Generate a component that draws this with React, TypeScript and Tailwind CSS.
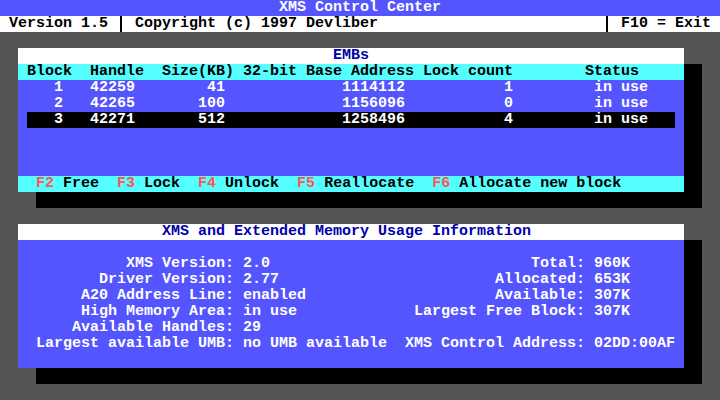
import React from 'react';

// 74-column text line inside a window, parts placed at column offsets
const WIDTH = 74;
const line = (parts: Array<[number, string]>) => {
  const cells = Array(WIDTH).fill(' ');
  parts.forEach(([col, text]) => {
    for (let i = 0; i < text.length; i++) cells[col + i] = text[i];
  });
  return cells.join('');
};
// right-aligned, ending at column `end`
const r = (end: number, text: string): [number, string] => [end - text.length + 1, text];

const blocks = [
  { block: '1', handle: '42259', size: '41', base: '1114112', locks: '1', status: 'in use' },
  { block: '2', handle: '42265', size: '100', base: '1156096', locks: '0', status: 'in use' },
  { block: '3', handle: '42271', size: '512', base: '1258496', locks: '4', status: 'in use' },
];

const info: Array<[string, string, string, string]> = [
  ['XMS Version:', '2.0', 'Total:', '960K'],
  ['Driver Version:', '2.77', 'Allocated:', '653K'],
  ['A20 Address Line:', 'enabled', 'Available:', '307K'],
  ['High Memory Area:', 'in use', 'Largest Free Block:', '307K'],
  ['Available Handles:', '29', '', ''],
  ['Largest available UMB:', 'no UMB available', 'XMS Control Address:', '02DD:00AF'],
];

const Bar = () => (
  <span className="inline-block w-[9px] h-4 shrink-0">
    <span className="block ml-[3px] w-[2px] h-4 bg-black" />
  </span>
);

const Row = ({ className = '', children }: { className?: string; children?: React.ReactNode }) => (
  <div className={`h-4 whitespace-pre ${className}`}>{children}</div>
);

const Key = ({ k }: { k: string }) => <span className="text-[#ff5555]">{k}</span>;

export default function App() {
  return (
    <div className="w-[720px] h-[400px] bg-[#555555] flex flex-col overflow-hidden font-['Liberation_Mono','DejaVu_Sans_Mono',monospace] font-bold text-[15px] leading-4">
      <Row className="bg-[#5555ff] text-white text-center">XMS Control Center</Row>
      <div className="h-4 bg-white text-black flex whitespace-pre">
        <span>{' Version 1.5 '}</span>
        <Bar />
        <span>{' Copyright (c) 1997 Devliber' + ' '.repeat(25)}</span>
        <Bar />
        <span>{' F10 = Exit '}</span>
      </div>
      <Row />

      {/* EMBs window */}
      <div className="ml-[18px] w-[666px] flex flex-col shadow-[18px_16px_0_0_#000]">
        <Row className="bg-white text-[#0000aa]">{line([[35, 'EMBs']])}</Row>
        <Row className="bg-[#55ffff] text-black">
          {line([[1, 'Block'], [8, 'Handle'], [16, 'Size(KB)'], [25, '32-bit Base Address'], [45, 'Lock count'], [63, 'Status']])}
        </Row>
        <div className="bg-[#5555ff] text-white h-24 flex flex-col">
          {blocks.map((b, i) => {
            const text = line([[4, b.block], [8, b.handle], r(22, b.size), r(42, b.base), r(54, b.locks), [64, b.status]]);
            return (
              <Row key={b.block} className={`ml-[9px] w-[648px] ${i === 2 ? 'bg-black' : ''}`}>
                {text.slice(1, 73)}
              </Row>
            );
          })}
        </div>
        <Row className="bg-[#55ffff] text-black">
          {'  '}<Key k="F2" />{' Free  '}<Key k="F3" />{' Lock  '}<Key k="F4" />{' Unlock  '}<Key k="F5" />{' Reallocate  '}<Key k="F6" />{' Allocate new block'}
        </Row>
      </div>

      {/* Usage information window */}
      <div className="mt-8 ml-[18px] w-[666px] flex flex-col shadow-[18px_16px_0_0_#000]">
        <Row className="bg-white text-[#0000aa]">{line([[16, 'XMS and Extended Memory Usage Information']])}</Row>
        <div className="bg-[#5555ff] text-white h-32 flex flex-col pt-4">
          {info.map(([label, value, rLabel, rValue]) => (
            <Row key={label}>
              {line([r(23, label), [25, value], ...(rLabel ? [r(62, rLabel), [64, rValue] as [number, string]] : [])])}
            </Row>
          ))}
        </div>
      </div>
    </div>
  );
}
